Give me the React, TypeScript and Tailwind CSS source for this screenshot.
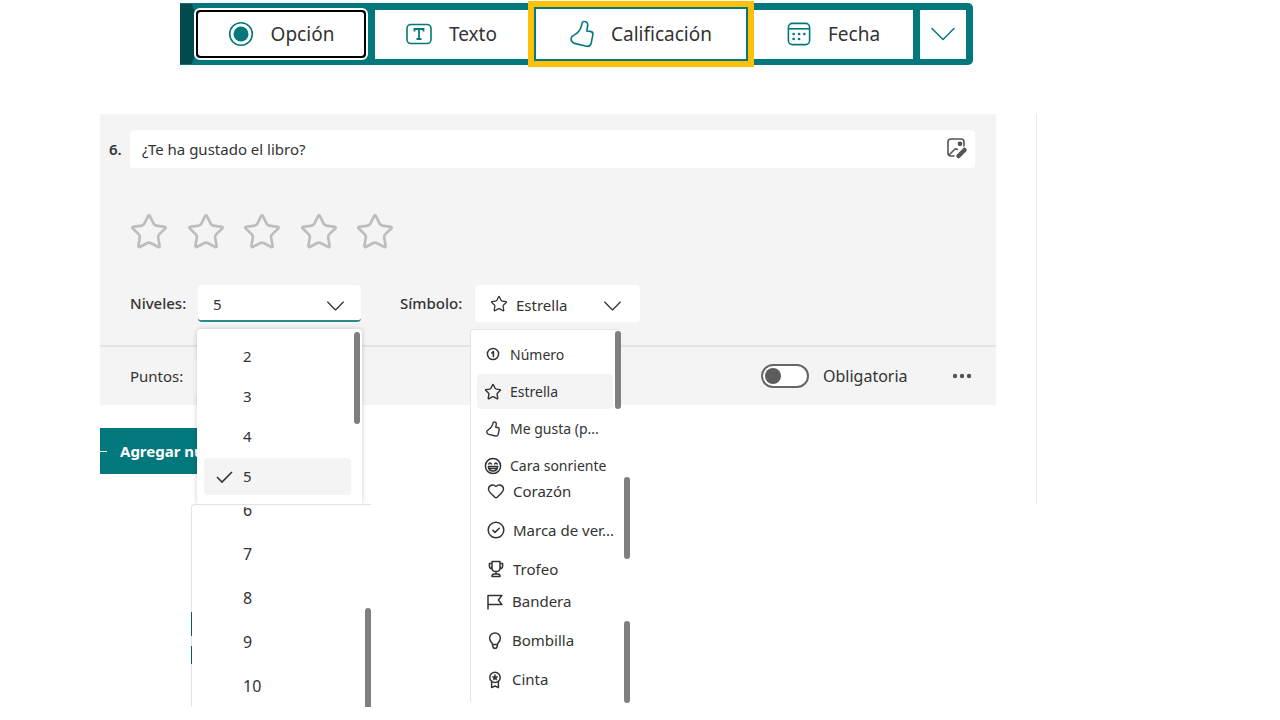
import type { ReactNode } from "react"
import { Heart, Star } from "lucide-react"

const levelsTop = ["2", "3", "4", "5"]
const levelsBottom = ["6", "7", "8", "9", "10"]

function ThumbIcon({ className, stroke = 2 }: { className: string; stroke?: number }) {
  return (
    <svg viewBox="0 0 24 28" className={className} fill="none" stroke="currentColor" strokeWidth={stroke} strokeLinejoin="round">
      <path d="M14 1.5C16.4 1.3 18 3.2 17.7 5.5L16.8 11L20.4 11.4C22.2 11.7 23.1 13 22.9 14.6L21.2 23C20.6 25.6 18.8 26.8 16.4 26.3L4.6 23.4C2.4 22.8 1.1 20.8 1.1 18.6C1.2 17 2.2 16 3.6 15.4C7.6 13.4 10.2 10.4 11.4 6L12.1 3C12.4 2.1 13.1 1.6 14 1.5Z" />
    </svg>
  )
}

function Icon({ children }: { children: ReactNode }) {
  return (
    <svg viewBox="0 0 20 20" className="size-5 shrink-0" fill="none" stroke="currentColor" strokeWidth="1.5" strokeLinejoin="round" strokeLinecap="round">
      {children}
    </svg>
  )
}

function Chevron({ className }: { className: string }) {
  return (
    <svg viewBox="0 0 24 14" className={className} fill="none" stroke="currentColor" strokeLinecap="round" strokeLinejoin="round">
      <path d="M1 1.5L12 12.5L23 1.5" />
    </svg>
  )
}

const symbolGroups = [
  {
    className: "h-[147px] w-[151px] pt-[7px] pl-[6px] rounded-t text-[14px]",
    list: "gap-[2px]",
    row: "h-[35px] w-[136px] gap-[7px] pl-[6px]",
    bar: "top-[1px] right-0 h-[78px]",
    items: [
      { label: "Número", icon: <Icon><circle cx="10" cy="9" r="5.6" /><path d="M8.8 8L10.4 6.6V11.6" strokeWidth="1.6" /></Icon> },
      { label: "Estrella", active: true, icon: <Star className="size-5 shrink-0 p-[1px]" strokeWidth={1.9} /> },
      { label: "Me gusta (p...", icon: <span className="flex w-5 shrink-0 justify-center"><ThumbIcon className="h-4 w-[14px]" stroke={2.4} /></span> },
      {
        label: "Cara sonriente",
        icon: (
          <Icon>
            <circle cx="10" cy="10" r="7.6" />
            <path d="M5.4 10.6H14.6C14.4 13.4 12.6 14.9 10 14.9S5.6 13.4 5.4 10.6ZM6.4 12.4H13.6M5.8 8C6.2 6.6 8 6.6 8.4 8M11.6 8C12 6.6 13.8 6.6 14.2 8" />
          </Icon>
        ),
      },
    ],
  },
  {
    className: "h-[108px] w-[160px] pl-[6px]",
    list: "gap-[9px]",
    row: "h-[30px] w-[150px] gap-[7px] pl-[9px]",
    bar: "top-[1px] right-0 h-[82px]",
    items: [
      { label: "Corazón", icon: <Heart className="size-5 shrink-0 p-[1px]" strokeWidth={1.9} /> },
      { label: "Marca de ver...", icon: <Icon><circle cx="10" cy="10" r="7.8" /><path d="M6.8 10.2L9 12.4L13.3 8.2" /></Icon> },
      {
        label: "Trofeo",
        icon: (
          <Icon>
            <path d="M6 2.5H14V9C14 11.2 12.2 12.6 10 12.6S6 11.2 6 9ZM6 4.5H3.4V7C3.4 8.8 4.4 9.6 6.2 9.7M14 4.5H16.6V7C16.6 8.8 15.6 9.6 13.8 9.7M10 12.6V15M6 17.4C6 15.6 6.8 15 8 15H12C13.2 15 14 15.6 14 17.4Z" />
          </Icon>
        ),
      },
    ],
  },
  {
    className: "h-[119px] w-[160px] pl-[6px] rounded-b",
    list: "gap-[4px]",
    row: "h-[35px] w-[150px] gap-[7px] pl-[8px]",
    bar: "bottom-0 right-0 h-[82px]",
    items: [
      { label: "Bandera", icon: <Icon><path d="M3 17V3.4H17L13.4 8L17 12.6H3" /></Icon> },
      { label: "Bombilla", icon: <Icon><path d="M10 2C6.8 2 4.6 4.4 4.6 7.2C4.6 9.4 6 10.8 7.2 12.4L8 16C8.2 17 8.8 17.4 10 17.4S11.8 17 12 16L12.8 12.4C14 10.8 15.4 9.4 15.4 7.2C15.4 4.4 13.2 2 10 2ZM7.4 13.4H12.6" /></Icon> },
      {
        label: "Cinta",
        icon: (
          <Icon>
            <circle cx="10" cy="7.4" r="5.2" />
            <path d="M6.6 11.8V17.6L10 16L13.4 17.6V11.8" />
            <path fill="currentColor" strokeWidth="0.6" d="M10 4.6L10.9 6.5L12.9 6.7L11.4 8.1L11.8 10.1L10 9.1L8.2 10.1L8.6 8.1L7.1 6.7L9.1 6.5Z" />
          </Icon>
        ),
      },
    ],
  },
]

function Toolbar() {
  return (
    <nav className="mt-[3px] mr-[307px] ml-[180px] flex h-[62px] items-center rounded-r-[5px] bg-[#03787c] text-[19px] text-[#333]">
      <div className="h-[60px] w-[14px] bg-[#024a4b] [clip-path:polygon(0_0,85%_0,100%_10%,100%_90%,85%_100%,0_100%)]" />
      <button className="flex h-[52px] flex-[166] items-center rounded-md border-2 border-white bg-black p-[2px]">
        <span className="flex h-full w-full items-center justify-center gap-[17px] rounded-[3px] bg-white">
          <svg viewBox="0 0 26 26" className="size-[26px] text-[#03787c]">
            <circle cx="13" cy="13" r="11.3" fill="none" stroke="currentColor" strokeWidth="1.6" />
            <circle cx="13" cy="13" r="7.5" fill="currentColor" />
          </svg>
          Opción
        </span>
      </button>
      <button className="ml-[7px] flex h-[49px] flex-[153] items-center justify-center gap-[17px] bg-white">
        <svg viewBox="0 0 26 22" className="h-[22px] w-[26px] text-[#03787c]" fill="none" stroke="currentColor" strokeWidth="1.6">
          <rect x="1" y="1.5" width="24" height="19" rx="4" />
          <path d="M8.5 8.5V6H17.5V8.5M13 6V16M10.5 16H15.5" strokeWidth="1.8" />
        </svg>
        Texto
      </button>
      <button className="flex h-[66px] flex-[210] items-center border-[6px] border-[#ffc107] bg-[#03787c] p-[2px]">
        <span className="flex h-full w-full items-center justify-center gap-[17px] bg-white">
          <ThumbIcon className="h-[28px] w-[24px] text-[#03787c]" stroke={1.6} />
          Calificación
        </span>
      </button>
      <button className="flex h-[49px] flex-[159] items-center justify-center gap-[17px] bg-white">
        <svg viewBox="0 0 24 24" className="size-6 text-[#03787c]" fill="none" stroke="currentColor" strokeWidth="1.6">
          <rect x="1.4" y="1.4" width="21.2" height="21.2" rx="4" />
          <path d="M1.4 6.8H22.6" />
          <path d="M6.6 12H6.7M12 12H12.1M17.3 12H17.4M6.6 17H6.7M12 17H12.1" strokeWidth="2.6" strokeLinecap="round" />
        </svg>
        Fecha
      </button>
      <button aria-label="Más tipos" className="mx-[7px] flex h-[49px] w-[46px] items-center justify-center bg-white text-[#03787c]">
        <Chevron className="h-[14px] w-6 stroke-[1.5]" />
      </button>
    </nav>
  )
}

function LevelMenu() {
  return (
    <div className="absolute top-[44px] left-[-1px] z-10">
      <div className="relative h-[175px] w-[165px] rounded-t bg-white pt-[9px] pl-[7px] shadow-[0_0_5px_rgba(0,0,0,0.2)]">
        <ul className="flex flex-col gap-[4px]">
          {levelsTop.map((level) => (
            <li key={level}>
              <button className={level === "5" ? "flex h-[37px] w-[147px] items-center rounded bg-[#f4f4f4] pl-[12px]" : "flex h-[36px] w-[147px] items-center pl-[12px]"}>
                <span className="w-[27px]">
                  {level === "5" && (
                    <svg viewBox="0 0 17 14" className="h-[14px] w-[17px]" fill="none" stroke="currentColor" strokeWidth="1.6">
                      <path d="M1 7L6 12L16 2" />
                    </svg>
                  )}
                </span>
                {level}
              </button>
            </li>
          ))}
        </ul>
        <span className="absolute top-[3px] right-[2px] h-[92px] w-[6px] rounded-full bg-[#7f7f7f]" />
      </div>
      <div className="relative ml-[-6px] h-[203px] w-[180px] overflow-hidden rounded-tl border-t border-l border-[#e3e3e3] bg-white pt-[2px] text-[16px]">
        <ul className="flex h-[201px] flex-col justify-end overflow-hidden">
          {levelsBottom.map((level) => (
            <li key={level} className="shrink-0">
              <button className="flex h-[44px] items-center pl-[51px]">{level}</button>
            </li>
          ))}
        </ul>
        <span className="absolute right-0 bottom-0 h-[99px] w-[6px] rounded-t-full bg-[#7f7f7f]" />
      </div>
      <span className="absolute top-[283px] left-[-6px] h-6 w-px bg-[#03605f]" />
      <span className="absolute top-[317px] left-[-6px] h-[18px] w-px bg-[#03605f]" />
    </div>
  )
}

function SymbolMenu() {
  return (
    <div className="absolute top-[44px] left-[-5px] z-10">
      {symbolGroups.map((group) => (
        <div key={group.items[0].label} className={`relative border-l border-[#e3e3e3] bg-white first:border-t ${group.className}`}>
          <ul className={`flex flex-col ${group.list}`}>
            {group.items.map((item) => (
              <li key={item.label}>
                <button className={`flex items-center whitespace-nowrap rounded ${group.row} ${"active" in item ? "bg-[#f4f4f4]" : ""}`}>
                  {item.icon}
                  {item.label}
                </button>
              </li>
            ))}
          </ul>
          <span className={`absolute w-[6px] rounded-full bg-[#7f7f7f] ${group.bar}`} />
        </div>
      ))}
    </div>
  )
}

export default function App() {
  return (
    <div className="flow-root min-h-screen bg-white font-['Noto_Sans',sans-serif] text-[15px] text-[#333]">
      <Toolbar />
      <main className="mt-[49px] pr-[243px] pl-[100px]">
        <div className="min-h-[390px] border-r border-[#e6eeee] pr-[40px]">
          <section className="bg-[#f4f4f4]">
            <div className="h-[231px] pt-[16px] pr-[21px]">
              <div className="flex items-center">
                <label htmlFor="question" className="w-[30px] pl-[9px] font-semibold">6.</label>
                <div className="flex h-[38px] flex-1 items-center rounded bg-white pr-[7px] pl-[12px]">
                  <input id="question" defaultValue="¿Te ha gustado el libro?" className="min-w-0 flex-1 outline-none" />
                  <button aria-label="Insertar imagen" className="text-[#555]">
                    <svg viewBox="0 0 22 22" className="size-[22px]" fill="none" stroke="currentColor" strokeWidth="1.6" strokeLinecap="round">
                      <path d="M8 18H5C3 18 2 17 2 15V4C2 2 3 1 5 1H15C17 1 18 2 18 4V8M3 17L8.5 11.5C9.3 10.7 10.5 10.7 11.3 11.5" />
                      <circle cx="14" cy="5.8" r="1.6" fill="currentColor" />
                      <path d="M12.5 18L18.5 12" strokeWidth="4.5" />
                    </svg>
                  </button>
                </div>
              </div>

              <div className="mt-[44px] ml-[29px] flex w-[266px] justify-between">
                {[1, 2, 3, 4, 5].map((n) => (
                  <button key={n} aria-label={`${n} estrellas`}>
                    <Star className="size-[40px] text-[#bdbdbd]" strokeWidth={1.6} />
                  </button>
                ))}
              </div>

              <div className="mt-[33px] flex items-center pl-[30px]">
                <label htmlFor="levels" className="w-[68px] font-medium">Niveles:</label>
                <div className="relative">
                  <select id="levels" className="block h-[37px] w-[163px] appearance-none rounded border-b-2 border-[#2b8a8a] bg-white pt-[4px] pl-[15px] outline-none">
                    <option>5</option>
                  </select>
                  <Chevron className="pointer-events-none absolute top-[16px] right-[16px] h-[10px] w-[19px] stroke-[1.8]" />
                  <LevelMenu />
                </div>
                <label htmlFor="symbol" className="ml-[39px] w-[75px] font-medium">Símbolo:</label>
                <div className="relative">
                  <select id="symbol" className="block h-[37px] w-[165px] appearance-none rounded bg-white pt-[4px] pl-[41px] outline-none">
                    <option>Estrella</option>
                  </select>
                  <Star className="pointer-events-none absolute top-[10px] left-[15px] size-[18px]" strokeWidth={1.7} />
                  <Chevron className="pointer-events-none absolute top-[16px] right-[18px] h-[10px] w-[19px] stroke-[1.8]" />
                  <SymbolMenu />
                </div>
              </div>
            </div>

            <div className="flex h-[60px] items-center border-t-2 border-[#e3e3e3] pr-[24px] pl-[30px]">
              <label htmlFor="points" className="w-[64px]">Puntos:</label>
              <input id="points" className="h-[37px] w-[60px] rounded bg-[#fafafa] outline-none" />
              <input id="required" type="checkbox" className="ml-auto h-[24px] w-[48px] appearance-none rounded-full border-2 border-[#666] bg-white p-[2px] before:block before:size-[16px] before:rounded-full before:bg-[#5c5c5c]" />
              <label htmlFor="required" className="ml-[14px] w-[88px] text-[16px]">Obligatoria</label>
              <button aria-label="Más opciones" className="ml-[41px] text-[#555]">
                <svg viewBox="0 0 20 6" className="h-[6px] w-[20px]" fill="currentColor">
                  <circle cx="3" cy="3" r="2.2" />
                  <circle cx="10" cy="3" r="2.2" />
                  <circle cx="17" cy="3" r="2.2" />
                </svg>
              </button>
            </div>
          </section>

          <button className="mt-[23px] flex h-[46px] w-[97px] items-center gap-[13px] overflow-hidden bg-[#03787c] font-bold whitespace-nowrap text-white">
            <span className="h-px w-[7px] shrink-0 bg-white" />
            Agregar nu
          </button>
        </div>
      </main>
    </div>
  )
}
